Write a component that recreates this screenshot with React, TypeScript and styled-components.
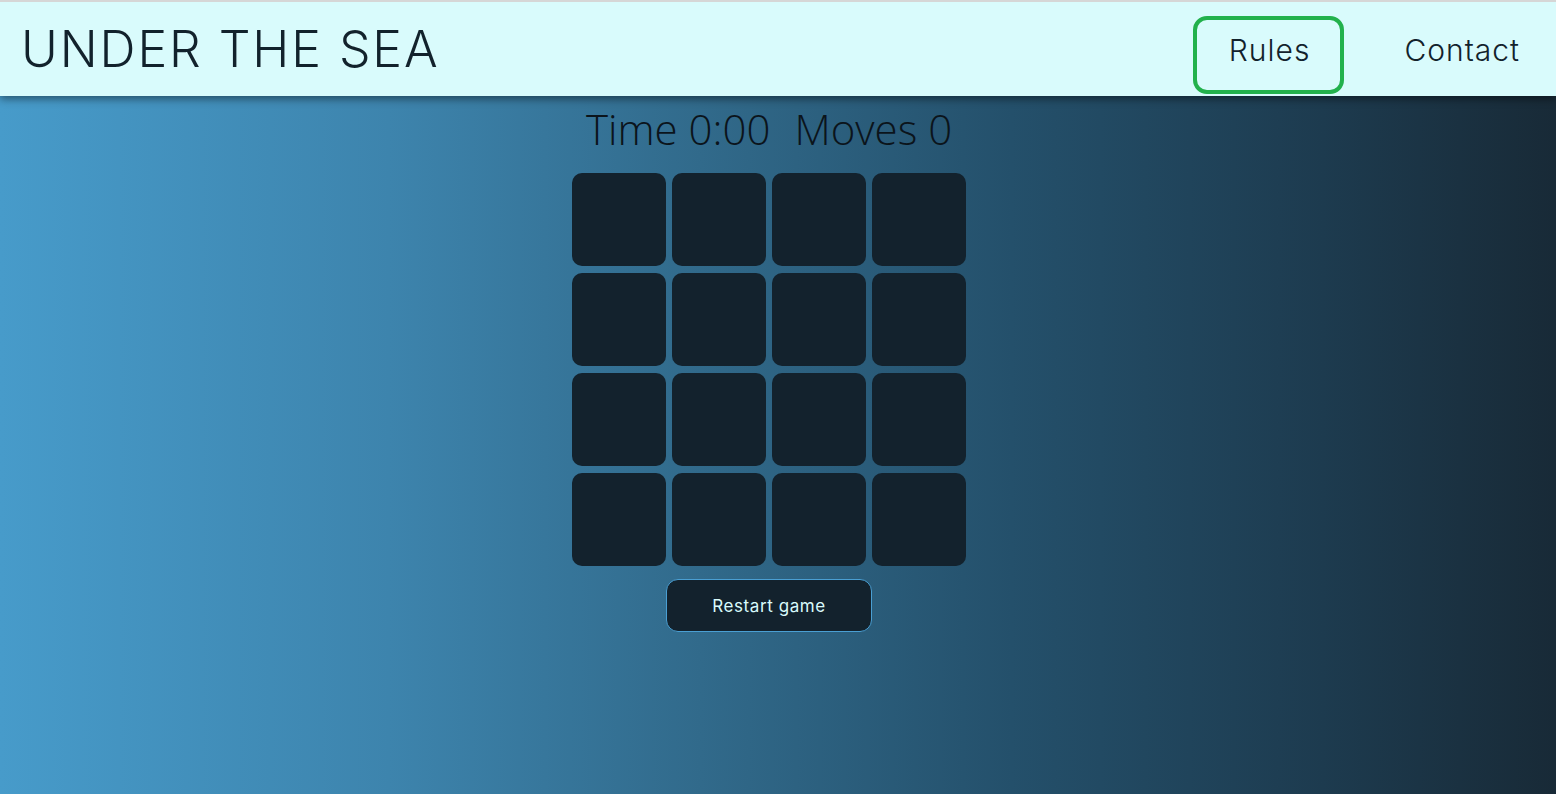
import React from "react";
import styled, { createGlobalStyle } from "styled-components";

const Global = createGlobalStyle`
  html, body { margin: 0; padding: 0; }
  body { font-family: "Inter", "Lato", "Noto Sans", sans-serif; }
  #root { min-height: 100vh; }
`;

const Page = styled.div`
  min-height: 100vh;
  display: flex;
  flex-direction: column;
  background: linear-gradient(to right, #479bca 0%, #3d84ad 25%, #316a8b 45%, #24506b 65%, #1d3b4f 85%, #182a37 100%);
`;

const Header = styled.header`
  height: 94px;
  border-top: 2px solid #d6d6d6;
  background: #d9fbfc;
  display: flex;
  align-items: center;
  justify-content: space-between;
  padding: 0 2px 0 21px;
  box-shadow: 0 3px 8px rgba(0, 0, 0, 0.45);
  position: relative;
  z-index: 1;
`;

const Title = styled.h1`
  margin: 0;
  font-family: "Inter", "Lato", sans-serif;
  font-weight: 300;
  font-size: 50px;
  letter-spacing: 1.9px;
  color: #12222c;
`;

const Nav = styled.nav`
  display: flex;
  align-items: flex-end;
  align-self: stretch;
  gap: 24px;
  padding-bottom: 2px;
`;

const NavLink = styled.a<{ $active?: boolean }>`
  box-sizing: border-box;
  height: 78px;
  display: flex;
  align-items: center;
  padding: 0 30px 10px 32px;
  border: 4px solid ${(p) => (p.$active ? "#22b14c" : "transparent")};
  border-radius: 14px;
  font-family: "Inter", "Lato", sans-serif;
  font-weight: 300;
  font-size: 30px;
  letter-spacing: 1px;
  color: #12222c;
  text-decoration: none;
  cursor: pointer;
`;

const Main = styled.main`
  display: flex;
  flex-direction: column;
  align-items: center;
  padding-right: 18px;
`;

const Stats = styled.div`
  margin-top: 7px;
  display: flex;
  gap: 24px;
  font-family: "Open Sans", "Lato", sans-serif;
  font-weight: 300;
  font-size: 42px;
  color: #0b141b;
  line-height: 52px;
`;

const Board = styled.div`
  margin-top: 18px;
  display: grid;
  grid-template-columns: repeat(4, 94px);
  grid-auto-rows: 93px;
  column-gap: 6px;
  row-gap: 7px;
`;

const Card = styled.div`
  background: #13222d;
  border-radius: 10px;
`;

const RestartButton = styled.button`
  margin-top: 13px;
  width: 206px;
  height: 53px;
  background: #13222d;
  border: 1px solid #4a9fd3;
  border-radius: 12px;
  color: #d9fbfc;
  font-family: "Inter", "Lato", sans-serif;
  font-size: 17px;
  font-weight: 400;
  letter-spacing: 0.6px;
  cursor: pointer;
`;

export default function App() {
  return (
    <>
      <Global />
      <Page>
        <Header>
          <Title>UNDER THE SEA</Title>
          <Nav>
            <NavLink $active>Rules</NavLink>
            <NavLink>Contact</NavLink>
          </Nav>
        </Header>
        <Main>
          <Stats>
            <span>Time 0:00</span>
            <span>Moves 0</span>
          </Stats>
          <Board>
            {Array.from({ length: 16 }).map((_, i) => (
              <Card key={i} />
            ))}
          </Board>
          <RestartButton>Restart game</RestartButton>
        </Main>
      </Page>
    </>
  );
}
